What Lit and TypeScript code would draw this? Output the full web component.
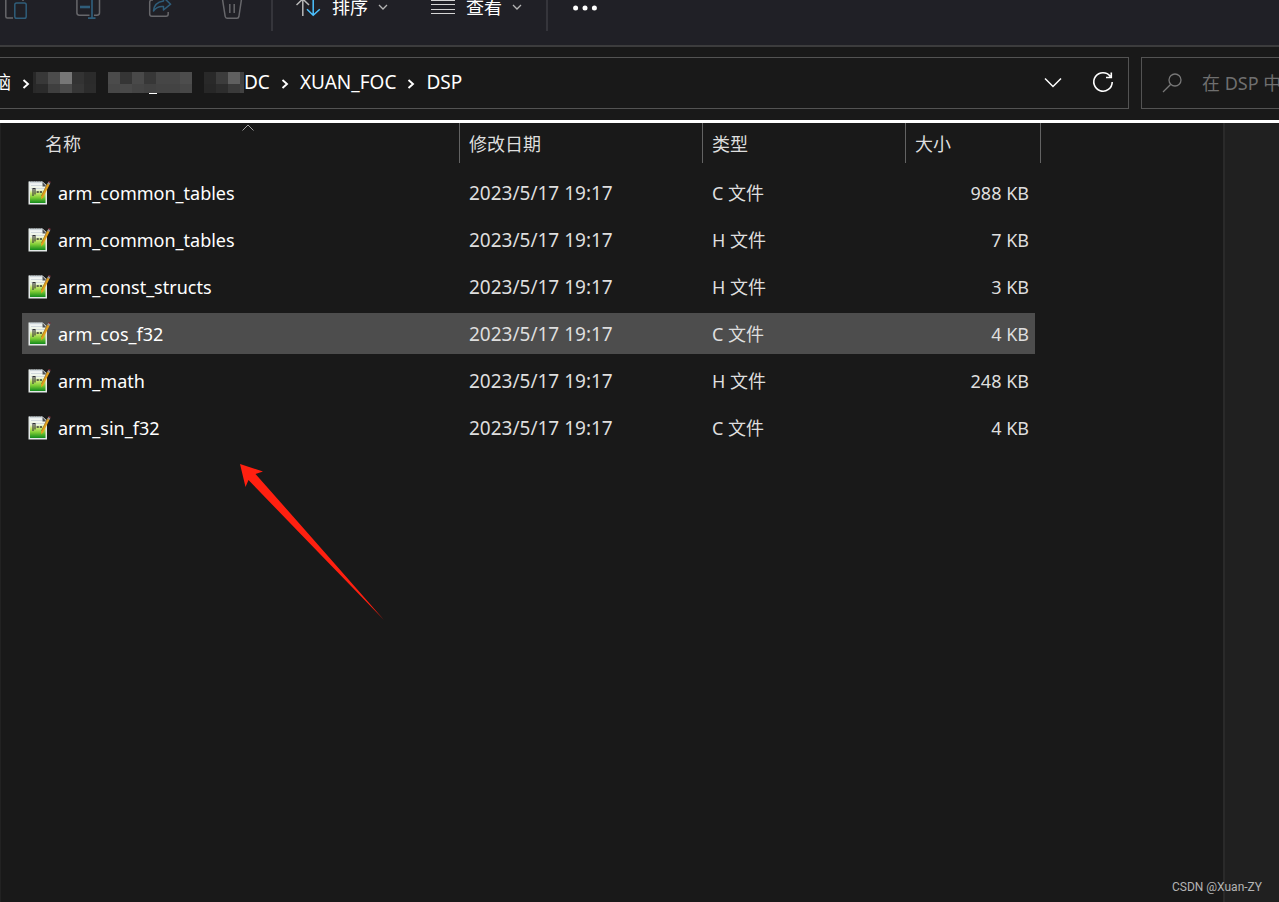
import { LitElement, html, css, svg } from "lit";
import { customElement, property } from "lit/decorators.js";

type FileRow = { name: string; date: string; kind: string; size: string; selected?: boolean };

const FILES: FileRow[] = [
  { name: "arm_common_tables", date: "2023/5/17 19:17", kind: "C 文件", size: "988 KB" },
  { name: "arm_common_tables", date: "2023/5/17 19:17", kind: "H 文件", size: "7 KB" },
  { name: "arm_const_structs", date: "2023/5/17 19:17", kind: "H 文件", size: "3 KB" },
  { name: "arm_cos_f32", date: "2023/5/17 19:17", kind: "C 文件", size: "4 KB", selected: true },
  { name: "arm_math", date: "2023/5/17 19:17", kind: "H 文件", size: "248 KB" },
  { name: "arm_sin_f32", date: "2023/5/17 19:17", kind: "C 文件", size: "4 KB" },
];

/* Redacted folder names: rows of 12px shade cells. */
type Mosaic = { widths: number[]; rows: string[][]; mark?: number };
const MOSAICS: Mosaic[] = [
  {
    widths: [3, 12, 12, 12, 12, 12],
    rows: [
      ["#282828", "#383838", "#4c4c4c", "#777777", "#333333", "#2b2b2b"],
      ["#292929", "#2b2b2b", "#3f3f3f", "#4a4a4a", "#363636", "#2c2c2c"],
    ],
  },
  {
    widths: [12, 12, 12, 12, 12, 12, 12],
    rows: [
      ["#4b4b4b", "#353535", "#494949", "#373737", "#464646", "#464646", "#4d4d4d"],
      ["#474747", "#494949", "#444444", "#414141", "#434343", "#434343", "#474747"],
    ],
    mark: 41,
  },
  {
    widths: [12, 12, 12, 4],
    rows: [
      ["#292929", "#3c3c3c", "#5f5f5f", "#3f3f3f"],
      ["#272727", "#2d2d2d", "#3a3a3a", "#414141"],
    ],
  },
];

@customElement("redacted-name")
export class RedactedName extends LitElement {
  @property({ attribute: false }) mosaic!: Mosaic;
  static styles = css`
    :host { display: block; }
    svg { display: block; }
  `;
  render() {
    const m = this.mosaic;
    const total = m.widths.reduce((a, b) => a + b, 0);
    return html`<svg width=${total} height="22" viewBox="0 0 ${total} 22" shape-rendering="crispEdges" aria-hidden="true">
      ${m.rows.map((row, r) => {
        let x = 0;
        return row.map((fill, i) => {
          const cell = svg`<rect x=${x} y=${r * 12} width=${m.widths[i]} height=${r ? 9 : 12} fill=${fill}></rect>`;
          x += m.widths[i];
          return cell;
        });
      })}
      ${m.mark ? svg`<rect x=${m.mark} y="21" width="8" height="1" fill="#fff"></rect>` : null}
    </svg>`;
  }
}

@customElement("file-icon")
export class FileIcon extends LitElement {
  static styles = css`
    :host { display: block; }
    svg { display: block; }
  `;
  render() {
    return html`<svg width="24" height="26" viewBox="0 0 24 26" aria-hidden="true">
      <defs>
        <linearGradient id="g" x1="0" y1="0" x2="0" y2="1">
          <stop offset="0" stop-color="#f2f5f6"></stop>
          <stop offset=".32" stop-color="#eef5e0"></stop>
          <stop offset=".5" stop-color="#c5e66a"></stop>
          <stop offset=".72" stop-color="#7ccb35"></stop>
          <stop offset="1" stop-color="#128a1c"></stop>
        </linearGradient>
      </defs>
      <path d="M.5 1.5H14.5L19 5.5V24.5H.5Z" fill="#e4e9e8"></path>
      <path d="M2 3.5H14.5L17.5 7V23H2Z" fill="url(#g)"></path>
      <path d="M2 2.5H14M3 5.5H14M3 8.5H17" stroke="#c9d2d7" stroke-width=".8"></path>
      <path d="M1 1.5H14" stroke="#9ba3a8" stroke-dasharray="1 1.4"></path>
      <path d="M14.5 2V6.5H18.5Z" fill="#4a4e52"></path>
      <path d="M5 16V8.5H7V14.5" fill="none" stroke="#333" stroke-width="1.1"></path>
      <path d="M8.6 12H10.8M11.8 12H14" stroke="#333" stroke-width="1.6"></path>
      <path d="M19.5 3.5L21.6 4.6L15.3 17.2L13 19.4L13.3 16.2Z" fill="#e2a01d"></path>
      <path d="M19.5 3.5L13.4 16" stroke="#9b6d16" stroke-width=".7"></path>
      <path d="M19.3 3.8L20.4 1.8L22.4 2.8L21.4 4.9Z" fill="#97989d"></path>
      <path d="M20.2 2L21 .9L22.7 1.8L22.2 3Z" fill="#7b2733"></path>
    </svg>`;
  }
}

const chevronRight = html`<svg class="sep" width="8" height="12" viewBox="0 0 8 12" aria-hidden="true">
  <path d="M1.5 2L6 6L1.5 10" fill="none" stroke="#fff" stroke-width="1.9"></path></svg>`;

const chevronSmall = html`<svg class="drop" width="10" height="16" viewBox="0 0 10 16" aria-hidden="true">
  <path d="M1 5L5 9L9 5" fill="none" stroke="#b4b4b4" stroke-width="1.3"></path></svg>`;

@customElement("app-root")
export class AppRoot extends LitElement {
  static styles = css`
    :host {
      display: flex;
      flex-direction: column;
      position: relative;
      min-height: 100vh;
      overflow: hidden;
      background: #191919;
      color: #fff;
      font-family: "Noto Sans", "Noto Sans CJK SC", sans-serif;
      font-size: 18px;
    }
    * { box-sizing: border-box; }
    button, input { font: inherit; color: inherit; background: none; border: 0; padding: 0; margin: 0; }
    svg { display: block; flex: none; }
    .toolbar {
      display: flex;
      align-items: flex-start;
      height: 47px;
      padding-left: 4px;
      background: #202026;
      border-bottom: 2px solid #3c3c3d;
    }
    .tool { display: flex; width: 26px; margin-right: 46px; line-height: 16px; }
    .tool:nth-of-type(4) { margin-right: 25px; }
    .rule { width: 2px; height: 31px; background: #35353b; }
    .menu { display: flex; align-items: flex-start; gap: 10px; line-height: 14px; white-space: nowrap; margin-left: 23px; }
    .menu.view { margin-left: 43px; margin-right: 24px; }
    .more { margin-left: 25px; }
    .nav {
      display: flex;
      gap: 12px;
      padding: 10px 0 11px;
      border-bottom: 3px solid #fff;
    }
    .address {
      flex: 1;
      min-width: 0;
      display: flex;
      align-items: center;
      height: 52px;
      border: 1px solid #535353;
      border-left: 0;
    }
    .crumbs { flex: 1; min-width: 0; display: flex; align-items: center; white-space: nowrap; font-size: 19px; }
    .crumbs a { color: inherit; text-decoration: none; line-height: 24px; padding-bottom: 2px; }
    .crumbs .cut { display: flex; justify-content: flex-end; width: 11px; overflow: hidden; font-size: 18px; }
    .sep { margin: 2px 11px 0; }
    .first .sep { margin-right: 3px; }
    .first { display: flex; align-items: center; }
    .names { display: flex; gap: 12px; align-items: center; }
    .actions { display: flex; align-items: center; gap: 28px; padding-right: 13px; }
    .search {
      display: flex;
      align-items: center;
      gap: 18px;
      width: 138px;
      height: 52px;
      padding-left: 20px;
      border: 1px solid #535353;
      border-right: 0;
      overflow: hidden;
    }
    .search input { flex: 1; min-width: 0; width: 100%; outline: 0; }
    .search input::placeholder { color: #6f6f6f; opacity: 1; }
    .body { flex: 1; display: flex; }
    .files { flex: 1; min-width: 0; padding-left: 22px; box-shadow: inset 1px 0 #222; }
    .preview { width: 56px; background: #202020; border-left: 2px solid #2a2a2a; }
    table { border-collapse: separate; border-spacing: 0; table-layout: fixed; width: 1019px; }
    .c-name { width: 438px; }
    .c-date { width: 243px; }
    .c-kind { width: 203px; }
    .c-size { width: 135px; }
    th { height: 46px; padding: 0; font-weight: 400; vertical-align: top; text-align: left; }
    th button {
      display: block;
      position: relative;
      width: 100%;
      height: 40px;
      padding-left: 9px;
      text-align: left;
      color: #dedede;
      border-right: 1px solid #636363;
    }
    th:first-child button { padding-left: 23px; }
    .sort { position: absolute; left: 219px; top: 1px; }
    td {
      height: 47px;
      padding: 0 0 0 9px;
      border: 0 solid transparent;
      border-width: 3px 0;
      background-clip: padding-box;
      color: #dedede;
      line-height: 24px;
      white-space: nowrap;
    }
    td:first-child { padding-left: 6px; color: #fff; border-radius: 2px 0 0 2px; }
    td.size { padding-right: 6px; border-right-width: 6px; text-align: right; }
    .selected td { background-color: #4d4d4d; }
    .name { display: flex; align-items: center; gap: 6px; }
    .date { font-size: 19px; }
    .arrow { position: absolute; left: 238px; top: 462px; pointer-events: none; }
    .mark {
      position: absolute;
      right: 17px;
      bottom: 7px;
      font: 12px/16px Roboto, Arial, sans-serif;
      color: #b4b4b4;
    }
  `;

  render() {
    return html`
      <div class="toolbar" role="toolbar">
        <button class="tool" aria-label="粘贴">
          <svg width="26" height="22" viewBox="0 0 26 22" fill="none" stroke-width="1.5">
            <path d="M1.8 0V16.5Q1.8 18 3.3 18H9M19 0V1" stroke="#67676b"></path>
            <rect x="10.8" y="3" width="11.4" height="15.2" rx="1.8" stroke="#2f5d7a"></rect>
          </svg>
        </button>
        <button class="tool" aria-label="重命名">
          <svg width="26" height="22" viewBox="0 0 26 22" fill="none" stroke-width="1.5">
            <path d="M.9 0V12.8Q.9 15.2 3.3 15.2H13.5M18 15.2H21Q23.5 15.2 23.5 12.8V0" stroke="#67676b"></path>
            <path d="M4 7H14" stroke="#2f5d7a" stroke-width="2.6"></path>
            <path d="M16 0V18.2M12 18.2H19.5" stroke="#2f5d7a" stroke-width="1.7"></path>
          </svg>
        </button>
        <button class="tool" aria-label="共享">
          <svg width="26" height="22" viewBox="0 0 26 22" fill="none" stroke-width="1.5" stroke-linejoin="round">
            <path d="M5 0H3.5Q1.7 .3 1.7 2.3V14Q1.7 16.3 4 16.3H18Q20.2 16.3 20.2 14V12" stroke="#67676b"></path>
            <path d="M15.5 -2.5L22.6 4.2L15.5 10V6.6Q9 6 5.5 11Q6 2.5 15.5 1Z" stroke="#2f5d7a"></path>
          </svg>
        </button>
        <button class="tool" aria-label="删除">
          <svg width="26" height="22" viewBox="0 0 26 22" fill="none" stroke="#67676b" stroke-width="1.5">
            <path d="M2.6 0L5.2 16.5Q5.5 18.2 7 18.2H17Q18.6 18.2 18.9 16.5L21.4 0M9.8 4V13M14.2 4V13"></path>
          </svg>
        </button>
        <div class="rule"></div>
        <button class="menu">
          <svg width="26" height="18" viewBox="0 0 26 18" fill="none" stroke-width="1.5">
            <path d="M6.8 16V-2M.5 5L6.8 -1L13 5" stroke="#b8b8b8"></path>
            <path d="M17.2 -2V15.4M11 9.2L17.2 15.2L23.8 9.2" stroke="#4cc2ff"></path>
          </svg>
          <span>排序</span>${chevronSmall}
        </button>
        <button class="menu view">
          <svg width="25" height="16" viewBox="0 0 25 16" shape-rendering="crispEdges">
            <path d="M0 .5H24M0 4.5H24M0 9.5H24M0 13.5H24" stroke="#d5d5d5" stroke-width="1"></path>
          </svg>
          <span>查看</span>${chevronSmall}
        </button>
        <div class="rule"></div>
        <button class="more" aria-label="查看更多">
          <svg width="26" height="16" viewBox="0 0 26 16" fill="#fff">
            <circle cx="2.6" cy="8" r="2.5"></circle><circle cx="12" cy="8" r="2.5"></circle><circle cx="21.4" cy="8" r="2.5"></circle>
          </svg>
        </button>
      </div>

      <div class="nav">
        <div class="address">
          <nav class="crumbs">
            <div class="first"><a class="cut" href="#">脑</a>${chevronRight}</div>
            <div class="names">
              ${MOSAICS.map((m) => html`<redacted-name .mosaic=${m}></redacted-name>`)}
            </div>
            <a href="#">DC</a>${chevronRight}
            <a href="#">XUAN_FOC</a>${chevronRight}
            <a href="#">DSP</a>
          </nav>
          <div class="actions">
            <button aria-label="历史记录">
              <svg width="20" height="20" viewBox="0 0 20 20" fill="none" stroke="#fff" stroke-width="1.5">
                <path d="M2 5.5L10 13.5L18 5.5"></path>
              </svg>
            </button>
            <button aria-label="刷新">
              <svg width="24" height="24" viewBox="0 0 24 24" fill="none" stroke="#fff" stroke-width="1.6">
                <path d="M19.4 5.5A9.2 9.2 0 1 0 21.2 11M20.3 1.5V6.5H15"></path>
              </svg>
            </button>
          </div>
        </div>
        <label class="search">
          <svg width="22" height="22" viewBox="0 0 22 22" fill="none" stroke="#777" stroke-width="1.3">
            <circle cx="13" cy="8" r="6"></circle><path d="M8.8 12.3L1 20"></path>
          </svg>
          <input type="text" aria-label="搜索" placeholder="在 DSP 中搜索" />
        </label>
      </div>

      <div class="body">
        <main class="files">
          <table>
            <colgroup><col class="c-name" /><col class="c-date" /><col class="c-kind" /><col class="c-size" /></colgroup>
            <thead>
              <tr>
                <th scope="col"><button>名称
                  <svg class="sort" width="14" height="8" viewBox="0 0 14 8" fill="none" stroke="#a0a0a0">
                    <path d="M1.5 6.5L7 1L12.5 6.5"></path>
                  </svg></button></th>
                <th scope="col"><button>修改日期</button></th>
                <th scope="col"><button>类型</button></th>
                <th scope="col"><button>大小</button></th>
              </tr>
            </thead>
            <tbody>
              ${FILES.map((f) => html`<tr class=${f.selected ? "selected" : ""}>
                <td><div class="name"><file-icon></file-icon><span>${f.name}</span></div></td>
                <td class="date">${f.date}</td>
                <td>${f.kind}</td>
                <td class="size">${f.size}</td>
              </tr>`)}
            </tbody>
          </table>
        </main>
        <aside class="preview"></aside>
      </div>

      <svg class="arrow" width="150" height="160" viewBox="0 0 150 160" aria-hidden="true">
        <path d="M2 2L25 9.5L17.5 12Q84 87 146 158Q76 86 10.5 18L7.5 25Z" fill="#ff2010"></path>
      </svg>
      <div class="mark">CSDN @Xuan-ZY</div>
    `;
  }
}
